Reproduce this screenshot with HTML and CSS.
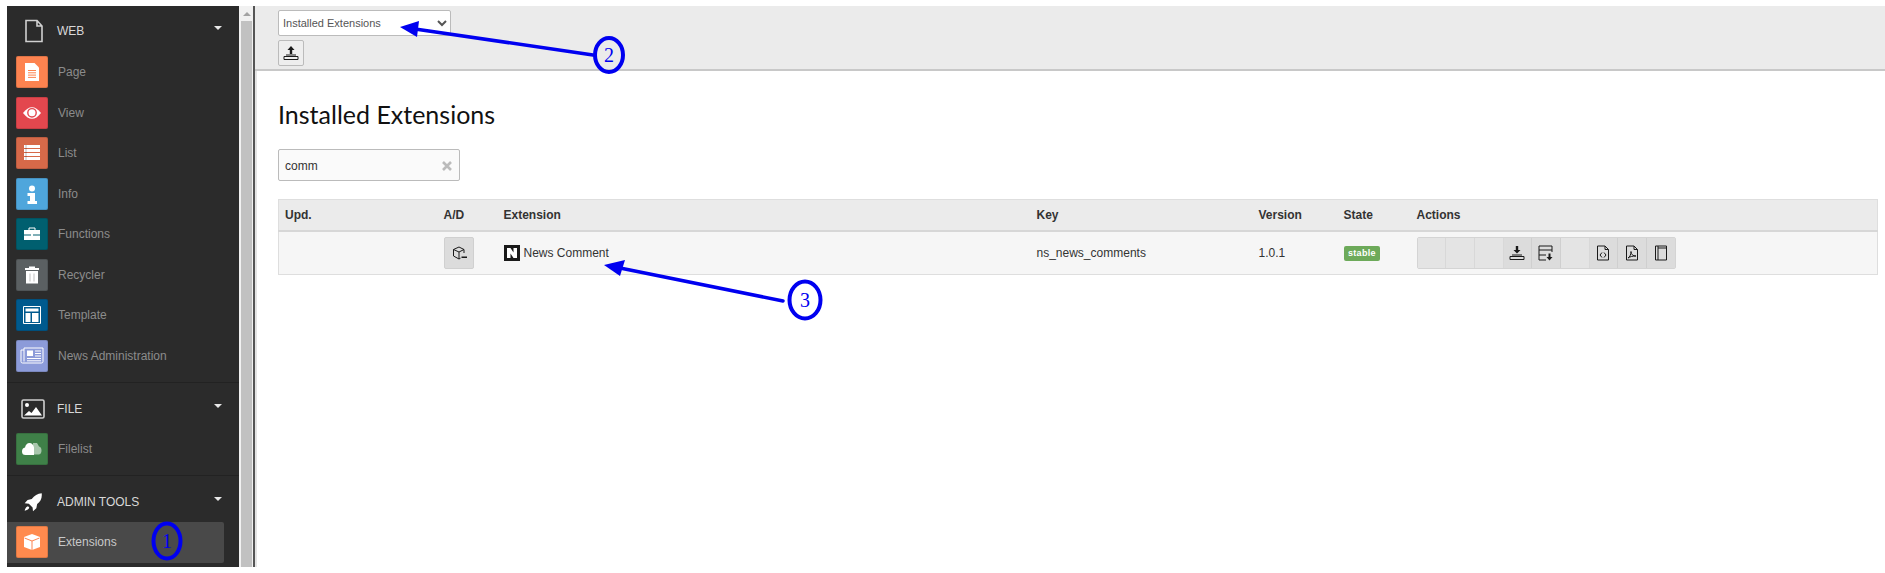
FILE: index.html
```html
<!DOCTYPE html>
<html lang="en">
<head>
  <meta charset="UTF-8" />
  <title>Installed Extensions</title>
  <link rel="stylesheet" href="styles.css">
</head>
<body>
  <div class="frame">
    <!-- Module menu -->
    <nav class="sidebar">
      <div class="group">
        <div class="group-head">
          <svg class="head-icon" viewBox="0 0 24 24"><path class="line" d="M4 1.5h11l5 5.500v15.500H4z M15 1.500v5.500h5"/></svg>
          <span>WEB</span><i class="caret"></i>
        </div>
        <div class="item">
          <span class="mod mod-page"><svg viewBox="0 0 32 32"><path class="w" d="M9 7h9.500l4.500 4.500V25H9z"/><path class="cut" d="M12 14.500h8M12 16.800h8M12 19.100h8M12 21.400h8"/></svg></span>
          <span>Page</span>
        </div>
        <div class="item">
          <span class="mod mod-view"><svg viewBox="0 0 32 32"><path class="w" d="M7 16c3-4 6-5.800 9-5.800s6 1.800 9 5.800c-3 4-6 5.800-9 5.800S10 20 7 16z"/><circle class="ring" cx="16" cy="15.800" r="4.200"/><circle class="w" cx="14.800" cy="14.800" r="1.500"/></svg></span>
          <span>View</span>
        </div>
        <div class="item">
          <span class="mod mod-list"><svg viewBox="0 0 32 32"><path class="w" d="M8 8h16v3H8zM8 12h16v3H8zM8 16h16v3H8zM8 20h16v3H8z"/><path class="cut thin" d="M10 8v15"/></svg></span>
          <span>List</span>
        </div>
        <div class="item">
          <span class="mod mod-info"><svg viewBox="0 0 32 32"><circle class="w" cx="16" cy="10.500" r="3"/><path class="w" d="M11.500 15h7.500v8h2v3H11.500v-3h2.500v-5h-2.500z"/></svg></span>
          <span>Info</span>
        </div>
        <div class="item">
          <span class="mod mod-func"><svg viewBox="0 0 32 32"><path class="w" d="M8 12h16v4.500H8zM8 17.500h16V22H8z"/><path class="line-w" d="M13 12v-2h6v2"/><path class="w" d="M15 15h2v4h-2z"/></svg></span>
          <span>Functions</span>
        </div>
        <div class="item">
          <span class="mod mod-trash"><svg viewBox="0 0 32 32"><path class="w" d="M9 9h14v2H9zM13 9V7.500h6V9zM10 12h12v12.500H10z"/><path class="cut thin" d="M14 14.500v8M18 14.500v8"/></svg></span>
          <span>Recycler</span>
        </div>
        <div class="item">
          <span class="mod mod-tmpl"><svg viewBox="0 0 32 32"><path class="line-w" d="M7.500 7.500h17v17h-17z"/><path class="w" d="M9.500 9.500h13v3h-13zM9.500 14h5v9h-5zM16 14h6.500v9H16z"/></svg></span>
          <span>Template</span>
        </div>
        <div class="item">
          <span class="mod mod-news"><svg viewBox="0 0 32 32"><path class="line-w" d="M8 10H5v11.500q0 1.500 1.500 1.500h19q1.500 0 1.500-1.500V8H8v13.500"/><path class="w" d="M11 10.500h6v5.500h-6z"/><path class="line-w" d="M19 11h6M19 13.500h6M19 16h6M11 18.500h14M11 20.800h14"/></svg></span>
          <span>News Administration</span>
        </div>
      </div>

      <div class="group">
        <div class="group-head">
          <svg class="head-icon wide" viewBox="0 0 24 20"><rect class="line" x="1" y="1" width="22" height="18" rx="1.500"/><circle class="w" cx="6" cy="6" r="2"/><path class="w" d="M3 16.500l5-4.500 2.500 2 4.500-6 6 8.500z"/></svg>
          <span>FILE</span><i class="caret"></i>
        </div>
        <div class="item">
          <span class="mod mod-file"><svg viewBox="0 0 32 32"><path class="w faint" d="M17 10h4l2 3.500q2.500 .500 2.500 4t-2.500 4h-6z"/><path class="w" d="M9.500 22q-3.500 0-3.500-3.500t3-4q1-4.500 4.500-4.500t4.500 4.500V22z"/></svg></span>
          <span>Filelist</span>
        </div>
      </div>

      <div class="group">
        <div class="group-head">
          <svg class="head-icon wide" viewBox="0 0 24 24"><path class="w" d="M22.500 1.500c-5 .5-9 2.500-12 7l-5 1-3.500 4 5 .5 4.500 4.500.5 4.500 4-3.500 1-5c4-3 6-7 5.500-12.500zM6 17c-2 .5-3.500 2.500-4 5.500 3-.5 5-2 5.500-4z"/></svg>
          <span>ADMIN TOOLS</span><i class="caret"></i>
        </div>
        <div class="item active">
          <span class="mod mod-ext"><svg viewBox="0 0 32 32"><path class="w" d="M16 8l8 3v10l-8 3-8-3V11z"/><path class="cut" d="M8.500 12l7.500 3 7.500-3M16 15v9"/></svg></span>
          <span>Extensions</span>
        </div>
        <div class="item">
          <span class="mod mod-next"></span>
        </div>
      </div>
    </nav>

    <div class="scrollbar">
      <i class="scroll-up"></i>
      <div class="scroll-thumb"></div>
    </div>

    <main class="main">
      <header class="docheader">
        <select class="menu-select">
          <option>Installed Extensions</option>
        </select>
        <button class="btn-icon" type="button">
          <svg viewBox="0 0 16 16"><path class="k" d="M8 1l3.500 4H9.200v4H6.800V5H4.500z"/><path class="k-line" d="M1 11.500h14v3H1zM3 10h10"/></svg>
        </button>
      </header>

      <div class="content">
        <h1>Installed Extensions</h1>

        <div class="search">
          <span>comm</span>
          <svg class="search-clear" viewBox="0 0 10 10"><path d="M1 1l8 8M9 1L1 9"/></svg>
        </div>

        <table class="ext-table">
          <colgroup>
            <col class="c-upd"><col class="c-ad"><col class="c-ext"><col class="c-key"><col class="c-ver"><col class="c-state"><col>
          </colgroup>
          <thead>
            <tr>
              <th>Upd.</th><th>A/D</th><th>Extension</th><th>Key</th><th>Version</th><th>State</th><th>Actions</th>
            </tr>
          </thead>
          <tbody>
            <tr>
              <td></td>
              <td>
                <button class="btn-ad" type="button">
                  <svg viewBox="0 0 16 16"><path class="k-line thin" d="M12 4.500L7 2 1.500 4.500v6.500L7 14l1.500-.8M1.500 4.500L7 7l5-2.500M7 7v7M12 4.500V8"/><path class="k" d="M9.500 11.500h5.500v1.500H9.500z"/></svg>
                </button>
              </td>
              <td>
                <span class="ext-name">
                  <svg class="ext-logo" viewBox="0 0 16 16"><path class="k" d="M0 0h16v16H0z"/><path class="w" d="M3 3h3.500l3 4.500V3H13v10H9.500l-3-4.500V13H3z"/></svg>
                  News Comment
                </span>
              </td>
              <td>ns_news_comments</td>
              <td>1.0.1</td>
              <td><span class="badge">stable</span></td>
              <td>
                <div class="actions">
                  <span class="act off"></span>
                  <span class="act off"></span>
                  <span class="act off"></span>
                  <span class="act">
                    <svg viewBox="0 0 16 16"><path class="k" d="M6.800 1h2.400v4h2.300L8 8.500 4.500 5h2.300z"/><path class="k-line" d="M1 11.500h14v3H1zM3 10h10"/></svg>
                  </span>
                  <span class="act">
                    <svg viewBox="0 0 16 16"><path class="k-line thin" d="M1 1h13v6M1 1v14h7M1 5h13M1 10h7"/><path class="k" d="M10.500 8.500h2V12h2l-3 3.500-3-3.500h2z"/></svg>
                  </span>
                  <span class="act off"></span>
                  <span class="act">
                    <svg viewBox="0 0 16 16"><path class="k-line thin" d="M2.500 1h7.500l3.500 3.500v10.500h-11zM10 1v3.500h3.500"/><path class="k-line thin" d="M7 7.500L5 10l2 2.500M9 7.500L11 10l-2 2.500"/></svg>
                  </span>
                  <span class="act">
                    <svg viewBox="0 0 16 16"><path class="k-line thin" d="M2.500 1h7.500l3.500 3.500v10.500h-11zM10 1v3.500h3.500"/><path class="k-line thin" d="M4 13c2-1 3-4 3-6.500 0 3 2 4.500 5 4.500-3 0-6 .5-8 2z"/></svg>
                  </span>
                  <span class="act">
                    <svg viewBox="0 0 16 16"><path class="k-line" d="M2.500 1h11v14h-11zM5 1v14M5 3h8.500"/></svg>
                  </span>
                </div>
              </td>
            </tr>
          </tbody>
        </table>
      </div>
    </main>
  </div>

  <!-- Numbered callouts drawn over the screenshot -->
  <svg class="callouts" viewBox="0 0 1885 573">
    <ellipse class="ring-blue" cx="167" cy="541" rx="13.500" ry="17.500"/>
    <text class="num" x="167" y="548">1</text>

    <path class="arrow" d="M593 55L415 29"/>
    <path class="arrow-head" d="M400 27L419 21L417 37z"/>
    <ellipse class="ring-blue" cx="609" cy="55" rx="14" ry="17"/>
    <text class="num" x="609" y="62">2</text>

    <path class="arrow" d="M783 301L620 268"/>
    <path class="arrow-head" d="M604 265L625 260L620 276z"/>
    <ellipse class="ring-blue" cx="805" cy="300" rx="15.500" ry="18.500"/>
    <text class="num" x="805" y="307">3</text>
  </svg>
</body>
</html>
```

FILE: styles.css
```css
* {
  box-sizing: border-box;
}
html, body {
  margin: 0;
  height: 100%;
  overflow: hidden;
}
body {
  background-color: #fff;
  font-family: "Liberation Sans", Arial, sans-serif;
  font-size: 12px;
  color: #333;
  padding: 6px 0 6px 7px;
}
.frame {
  display: flex;
  height: 100%;
}

/* sidebar */
.sidebar {
  width: 232px;
  flex: none;
  background-color: #2b2b2b;
  overflow: hidden;
}
.group {
  padding-bottom: 6px;
  border-bottom: 1px solid #222;
}
.group + .group + .group {
  border-bottom: none;
}
.group:nth-child(2) {
  padding-bottom: 5.5px;
}
.group-head {
  height: 46px;
  padding: 4px 15px 0 16px;
  display: flex;
  align-items: center;
  color: #d8d8d8;
  position: relative;
}
.group + .group .group-head {
  padding-top: 6px;
}
.head-icon {
  width: 24px;
  height: 24px;
  margin-right: 11px;
  margin-left: -1px;
  margin-top: -1px;
}
.head-icon.wide {
  height: 20px;
  margin-left: -2px;
  margin-right: 12px;
  width: 24px;
}
.caret {
  position: absolute;
  right: 17px;
  top: 20px;
  border-left: 4px solid transparent;
  border-right: 4px solid transparent;
  border-top: 4px solid #e8e8e8;
}
.group + .group .caret {
  top: 21px;
}
.item {
  height: 40.5px;
  width: 217px;
  padding-left: 9px;
  display: flex;
  align-items: center;
  gap: 10px;
  color: #8c8c8c;
  border-radius: 0 2px 2px 0;
}
.item.active {
  background-color: #494949;
  color: #c8c8c8;
}
.mod {
  width: 32px;
  height: 32px;
  flex: none;
  border-radius: 2px;
  box-shadow: inset 0 0 0 1px rgba(0, 0, 0, 0.12);
}
.mod svg {
  display: block;
  width: 32px;
  height: 32px;
}
.mod-page { background-color: #fd8350; }
.mod-view { background-color: #e3474e; }
.mod-list { background-color: #d66949; }
.mod-info { background-color: #4fa6dc; }
.mod-func { background-color: #005f6f; }
.mod-trash { background-color: #5b6062; }
.mod-tmpl { background-color: #005a8e; }
.mod-news { background-color: #8c9bd9; }
.mod-file { background-color: #3f8048; }
.mod-ext { background-color: #ff8a4e; }
.mod-next { background-color: #8a3a7e; }

/* svg paint */
.w { fill: #fff; }
.w.faint { fill: rgba(255, 255, 255, 0.55); }
.line { fill: none; stroke: #d0d0d0; stroke-width: 1.6; }
.line-w { fill: none; stroke: #fff; stroke-width: 1; }
.cut { fill: none; stroke: #fd8350; stroke-width: 1; }
.cut.thin { stroke: rgba(0, 0, 0, 0.25); }
.ring { fill: none; stroke: #e3474e; stroke-width: 1.400; }
.k { fill: #1a1a1a; }
.k-line { fill: none; stroke: #1a1a1a; stroke-width: 1; }
.k-line.thin { stroke-width: 1; }

/* scrollbar */
.scrollbar {
  width: 14px;
  flex: none;
  background-color: #f1f1f1;
  padding: 4px 1px 0 2px;
  display: flex;
  flex-direction: column;
  align-items: center;
}
.scroll-up {
  flex: none;
  border-left: 4px solid transparent;
  border-right: 4px solid transparent;
  border-bottom: 4px solid #a3a3a3;
  margin-top: 2px;
  margin-bottom: 5px;
}
.scroll-thumb {
  flex: 1;
  width: 100%;
  background-color: #c1c1c1;
}

/* main area */
.main {
  flex: 1;
  min-width: 0;
  border-left: 2px solid #555;
  box-shadow: inset 2px 0 0 #e4e4e4;
}
.docheader {
  height: 65px;
  background-color: #ebebeb;
  border-bottom: 2px solid #c8c8c8;
  padding: 4px 0 0 23px;
}
.menu-select {
  display: block;
  width: 173px;
  height: 26px;
  padding: 0;
  font-family: "Liberation Sans", Arial, sans-serif;
  font-size: 11px;
  color: #555;
  background-color: #fff;
  border: 1px solid #bbb;
  border-radius: 2px;
}
.btn-icon {
  display: block;
  margin-top: 4px;
  width: 26px;
  height: 26px;
  padding: 4px;
  background-color: #eee;
  border: 1px solid #bbb;
  border-radius: 2px;
}
.btn-icon svg {
  display: block;
  width: 16px;
  height: 16px;
}
.content {
  padding: 28px 6px 0 23px;
}
h1 {
  margin: 0;
  font-family: Lato, "Liberation Sans", sans-serif;
  font-size: 25px;
  line-height: 30px;
  font-weight: 400;
  color: #111;
}
.search {
  margin-top: 20px;
  width: 182px;
  height: 32px;
  padding: 1px 7px 0 6px;
  display: flex;
  align-items: center;
  justify-content: space-between;
  background-color: #fafafa;
  border: 1px solid #bbb;
  border-radius: 2px;
}
.search-clear {
  width: 10px;
  height: 10px;
}
.search-clear path {
  fill: none;
  stroke: #bbb;
  stroke-width: 2.600;
}

/* table */
.ext-table {
  margin-top: 18px;
  width: 1600px;
  table-layout: fixed;
  border-collapse: collapse;
  border: 1px solid #dedede;
}
.c-upd { width: 159px; }
.c-ad { width: 60px; }
.c-ext { width: 533px; }
.c-key { width: 222px; }
.c-ver { width: 85px; }
.c-state { width: 73px; }
th {
  height: 31px;
  padding: 0 6px;
  text-align: left;
  background-color: #ebebeb;
  border-bottom: 2px solid #d7d7d7;
}
td {
  height: 44px;
  padding: 0 6px;
  background-color: #f6f6f6;
}
.btn-ad {
  display: block;
  width: 30px;
  height: 32px;
  padding: 7px;
  background-color: #dcdcdc;
  border: 1px solid #d0d0d0;
  border-radius: 2px;
}
.btn-ad svg {
  display: block;
  width: 16px;
  height: 16px;
}
.ext-name {
  display: flex;
  align-items: center;
  gap: 4px;
}
.ext-logo {
  width: 16px;
  height: 16px;
}
.badge {
  display: inline-block;
  padding: 0 4.500px;
  height: 15px;
  line-height: 15px;
  font-size: 9px;
  font-weight: 700;
  letter-spacing: 0.3px;
  color: #fff;
  background-color: #6daa5a;
  border-radius: 2px;
}
.actions {
  display: flex;
  width: 259px;
  height: 32px;
  border: 1px solid #d4d4d4;
  border-radius: 2px;
}
.act {
  flex: 1;
  display: flex;
  align-items: center;
  justify-content: center;
  background-color: #dcdcdc;
  border-right: 1px solid #cfcfcf;
}
.act:last-child {
  border-right: none;
}
.act.off {
  background-color: #e4e4e4;
  border-right-color: #d8d8d8;
}
.act svg {
  width: 16px;
  height: 16px;
}

/* numbered callouts */
.callouts {
  position: absolute;
  left: 0;
  top: 0;
  width: 1885px;
  height: 573px;
  pointer-events: none;
}
.ring-blue {
  fill: none;
  stroke: #0000f0;
  stroke-width: 4;
}
.arrow {
  fill: none;
  stroke: #0000f0;
  stroke-width: 3.500;
  stroke-linecap: round;
}
.arrow-head {
  fill: #0000f0;
}
.num {
  font-family: "Liberation Serif", serif;
  font-size: 20px;
  fill: #0000f0;
  text-anchor: middle;
}
```
